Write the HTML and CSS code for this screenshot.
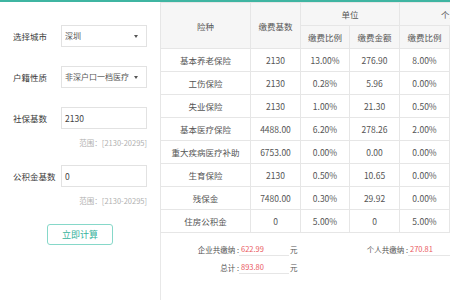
FILE: index.html
```html
<!DOCTYPE html>
<html lang="zh-CN">
<head>
    <meta charset="UTF-8">
    <meta name="viewport" content="width=device-width, initial-scale=1.0">
    <title>社保计算器</title>
    <link rel="stylesheet" href="styles.css">
</head>
<body>
<div class="page">
    <!-- 左侧表单 -->
    <div class="form">
        <div class="form-row">
            <span class="label">选择城市</span>
            <div class="field select">深圳</div>
        </div>
        <div class="form-row gap">
            <span class="label">户籍性质</span>
            <div class="field select">非深户口一档医疗</div>
        </div>
        <div class="form-row gap">
            <span class="label">社保基数</span>
            <div class="field">2130</div>
        </div>
        <div class="range">范围：[2130-20295]</div>
        <div class="form-row gap2">
            <span class="label">公积金基数</span>
            <div class="field">0</div>
        </div>
        <div class="range">范围：[2130-20295]</div>
        <button class="btn">立即计算</button>
    </div>

    <!-- 右侧结果 -->
    <div class="result">
        <table class="rates">
            <colgroup>
                <col style="width: 90px">
                <col style="width: 50px">
                <col style="width: 49px">
                <col style="width: 50px">
                <col style="width: 50px">
                <col style="width: 50px">
            </colgroup>
            <thead>
            <tr>
                <th rowspan="2">险种</th>
                <th rowspan="2">缴费基数</th>
                <th colspan="2">单位</th>
                <th colspan="2">个人</th>
            </tr>
            <tr>
                <th>缴费比例</th>
                <th>缴费金额</th>
                <th>缴费比例</th>
                <th>缴费金额</th>
            </tr>
            </thead>
            <tbody>
            <tr><td>基本养老保险</td><td>2130</td><td>13.00%</td><td>276.90</td><td>8.00%</td><td>170.40</td></tr>
            <tr><td>工伤保险</td><td>2130</td><td>0.28%</td><td>5.96</td><td>0.00%</td><td>0.00</td></tr>
            <tr><td>失业保险</td><td>2130</td><td>1.00%</td><td>21.30</td><td>0.50%</td><td>10.65</td></tr>
            <tr><td>基本医疗保险</td><td>4488.00</td><td>6.20%</td><td>278.26</td><td>2.00%</td><td>89.76</td></tr>
            <tr><td>重大疾病医疗补助</td><td>6753.00</td><td>0.00%</td><td>0.00</td><td>0.00%</td><td>0.00</td></tr>
            <tr><td>生育保险</td><td>2130</td><td>0.50%</td><td>10.65</td><td>0.00%</td><td>0.00</td></tr>
            <tr><td>残保金</td><td>7480.00</td><td>0.30%</td><td>29.92</td><td>0.00%</td><td>0.00</td></tr>
            <tr><td>住房公积金</td><td>0</td><td>5.00%</td><td>0</td><td>5.00%</td><td>0</td></tr>
            </tbody>
        </table>

        <div class="summary">
            <span class="sum-label">企业共缴纳 : </span>
            <span class="sum-value">622.99</span>
            <span class="unit">元</span>
            <span class="sum-label">个人共缴纳 : </span>
            <span class="sum-value">270.81</span>

            <span class="sum-label">总计 : </span>
            <span class="sum-value">893.80</span>
            <span class="unit">元</span>
        </div>
    </div>
</div>
</body>
</html>
```

FILE: styles.css
```css
body {
    margin: 0;
    overflow: hidden;
    font-family: "Noto Sans CJK SC", "Noto Sans", sans-serif;
    color: #444;
    background: #fff;
}

.page {
    display: flex;
    width: 560px;
    height: 300px;
    border-top: 2px solid #3fb5a2;
}

/* 左侧表单 */
.form {
    flex: none;
    width: 134px;
    padding: 23px 13px 0 13px;
}

.form-row {
    display: flex;
    align-items: center;
    height: 22px;
}

.form-row.gap {
    margin-top: 19px;
}

.form-row.gap2 {
    margin-top: 16px;
}

.label {
    width: 48px;
    font-size: 8.5px;
    color: #3a3a3a;
    white-space: nowrap;
}

.field {
    position: relative;
    box-sizing: border-box;
    width: 86px;
    height: 22px;
    line-height: 20px;
    padding-left: 3px;
    border: 1px solid #e2e2e2;
    font-size: 8.5px;
    color: #444;
}

.select {
    font-size: 8px;
    color: #555;
}

.select::after {
    content: "";
    position: absolute;
    right: 8px;
    top: 9px;
    border-left: 2px solid transparent;
    border-right: 2px solid transparent;
    border-top: 3px solid #555;
}

.range {
    margin-top: 8px;
    line-height: 12px;
    text-align: right;
    font-size: 7.5px;
    color: #b0b0b0;
}

.btn {
    display: block;
    margin: 17px 0 0 34px;
    width: 66px;
    height: 21px;
    padding: 0;
    background: #fff;
    border: 1px solid #86d8c9;
    border-radius: 3px;
    font-family: inherit;
    font-size: 9px;
    color: #35b39c;
}

/* 右侧结果 */
.result {
    flex: none;
    width: 360px;
    border-left: 1px solid #e8e8e8;
}

table.rates {
    table-layout: fixed;
    width: 339px;
    border-collapse: collapse;
    margin-left: -1px;
}

.rates th, .rates td {
    height: 22px;
    padding: 0;
    border: 1px solid #e6e6e6;
    text-align: center;
    font-size: 8.5px;
    font-weight: normal;
    color: #555;
    white-space: nowrap;
    overflow: hidden;
}

.rates thead {
    background-color: #f6f6f6;
}

.summary {
    display: grid;
    grid-template-columns: 78px 50px 42px 77px 50px;
    grid-auto-rows: 18px;
    align-items: end;
    padding-top: 5px;
    font-size: 7.5px;
    color: #555;
}

.sum-label {
    text-align: right;
    white-space: nowrap;
    line-height: 12px;
}

.sum-value {
    line-height: 12px;
    padding-left: 2px;
    color: #ea5a62;
    border-bottom: 1px solid #e6e6e6;
}

.unit {
    line-height: 12px;
    padding-left: 1px;
}
```
